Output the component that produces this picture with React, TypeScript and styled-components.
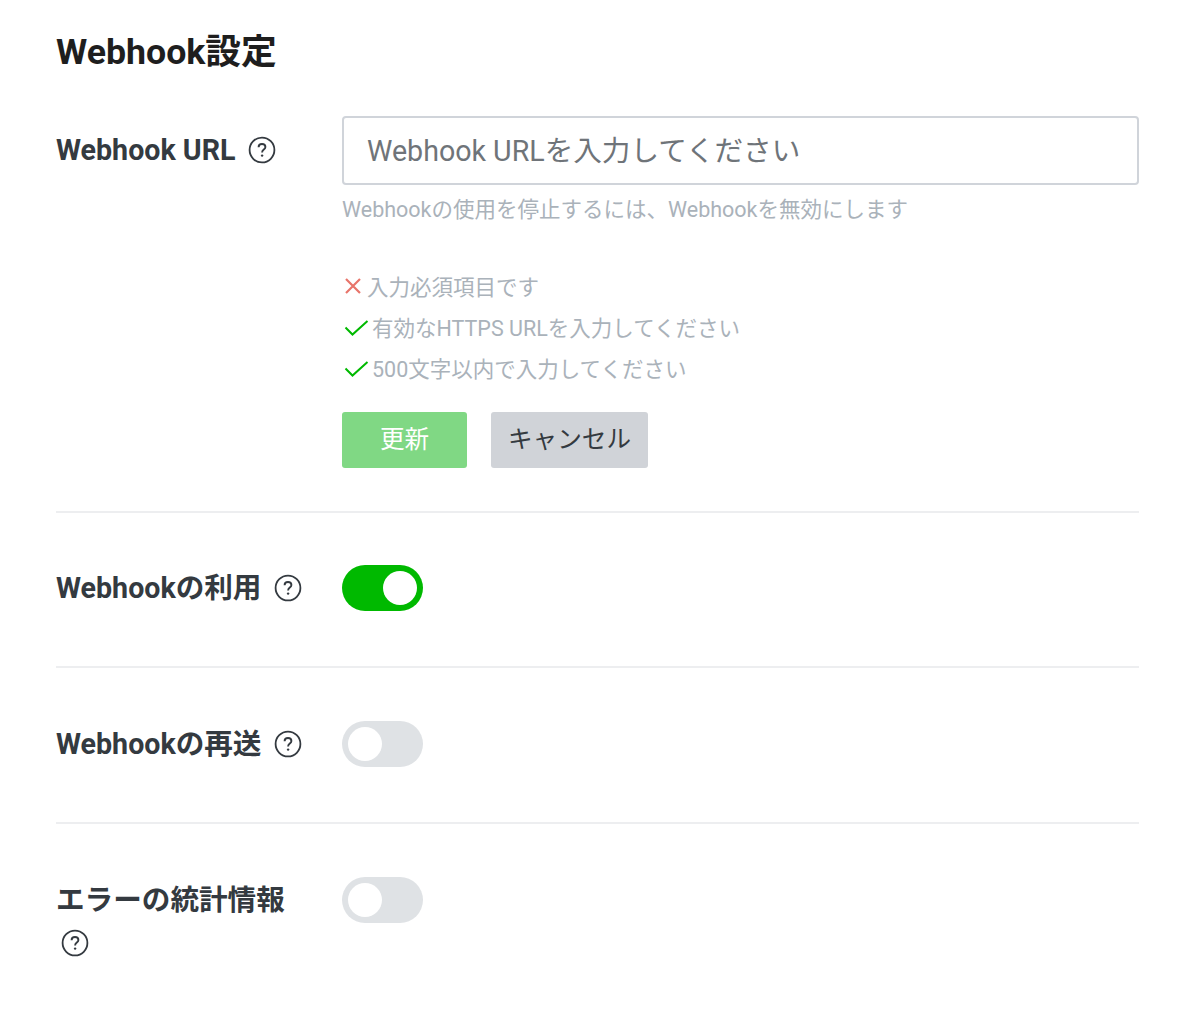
import styled, { createGlobalStyle } from 'styled-components';

const GlobalStyle = createGlobalStyle`
  html, body {
    margin:0;
    padding:0;
    background:#fff;
    font-family:Roboto, "Noto Sans CJK JP", sans-serif;
  }
`;

const Page = styled.div`
  padding:31px 61px 0 56px;
`;

const Title = styled.h1`
  margin:0 0 43px;
  font-size:35.7px;
  line-height:42px;
  font-weight:700;
  color:#1e1e1e;
`;

const Row = styled.section<{ $pad: string; $last?: boolean }>`
  display:grid;
  grid-template-columns:286px 1fr;
  padding:${p => p.$pad};
  border-bottom:${p => (p.$last ? 'none' : '2px solid #edeef0')};
`;

const Label = styled.div<{ $tall?: boolean }>`
  font-size:28.6px;
  line-height:43px;
  font-weight:700;
  color:#343a40;
  padding:${p => (p.$tall ? '13px 40px 0 0' : '2px 40px 0 0')};
`;

const Help = styled.svg`
  display:inline-block;
  width:28px;
  height:28px;
  margin-left:5px;
  vertical-align:-4px;
`;

const Input = styled.input`
  display:block;
  box-sizing:border-box;
  width:100%;
  height:69px;
  padding:0 23px;
  border:2px solid #d0d4da;
  border-radius:4px;
  background:#fff;
  font-family:inherit;
  font-size:28.6px;
  outline:none;
  &::placeholder { color:#6f7479; opacity:1; }
`;

const Hint = styled.p`
  margin:10px 0 40px;
  font-size:21.5px;
  line-height:30px;
  color:#aab2ba;
`;

const Rules = styled.ul`
  list-style:none;
  margin:0 0 24px;
  padding:0;
`;

const Rule = styled.li`
  display:flex;
  align-items:center;
  height:41px;
  font-size:21.5px;
  color:#aab2ba;
`;

const RuleIcon = styled.svg<{ $narrow?: boolean }>`
  flex:none;
  width:${p => (p.$narrow ? '25px' : '30px')};
  height:26px;
`;

const Buttons = styled.div`
  display:flex;
  gap:24px;
`;

const Button = styled.button<{ $primary?: boolean }>`
  height:56px;
  padding:0 17px 6px;
  min-width:125px;
  border:none;
  border-radius:3px;
  background:${p => (p.$primary ? '#80d884' : '#d0d3d8')};
  color:${p => (p.$primary ? '#fff' : '#343a40')};
  font-family:inherit;
  font-size:24.6px;
`;

const Track = styled.div<{ $on?: boolean }>`
  display:flex;
  justify-content:${p => (p.$on ? 'flex-end' : 'flex-start')};
  box-sizing:border-box;
  width:81px;
  height:46px;
  padding:6px;
  border-radius:23px;
  background:${p => (p.$on ? '#00b900' : '#dfe2e5')};
`;

const Knob = styled.div`
  width:34px;
  height:34px;
  border-radius:50%;
  background:#fff;
`;

function HelpIcon() {
  return (
    <Help viewBox="0 0 28 28" fill="none">
      <circle cx="14" cy="14" r="12.4" stroke="#343a40" strokeWidth="1.8" />
      <path d="M10.6 11.2c0-2 1.5-3.2 3.4-3.2s3.4 1.2 3.4 3c0 2.6-3.3 2.6-3.3 5.4" stroke="#343a40" strokeWidth="1.9" />
      <circle cx="14.1" cy="19.6" r="1.2" fill="#343a40" />
    </Help>
  );
}

function CrossIcon() {
  return (
    <RuleIcon $narrow viewBox="0 0 25 26" fill="none">
      <path d="M4 6l14 14M18 6L4 20" stroke="#e8756b" strokeWidth="2.2" />
    </RuleIcon>
  );
}

function CheckIcon() {
  return (
    <RuleIcon viewBox="0 0 30 26" fill="none">
      <path d="M3.5 13.5l7 7L25.5 7" stroke="#00b900" strokeWidth="2" />
    </RuleIcon>
  );
}

export default function App() {
  return (
    <Page>
      <GlobalStyle />
      <Title>Webhook設定</Title>
      <Row $pad="0 0 43px">
        <Label $tall>Webhook URL <HelpIcon /></Label>
        <div>
          <Input placeholder="Webhook URLを入力してください" />
          <Hint>Webhookの使用を停止するには、Webhookを無効にします</Hint>
          <Rules>
            <Rule><CrossIcon />入力必須項目です</Rule>
            <Rule><CheckIcon />有効なHTTPS URLを入力してください</Rule>
            <Rule><CheckIcon />500文字以内で入力してください</Rule>
          </Rules>
          <Buttons>
            <Button $primary>更新</Button>
            <Button>キャンセル</Button>
          </Buttons>
        </div>
      </Row>
      <Row $pad="52px 0 55px">
        <Label>Webhookの利用 <HelpIcon /></Label>
        <Track $on><Knob /></Track>
      </Row>
      <Row $pad="53px 0 55px">
        <Label>Webhookの再送 <HelpIcon /></Label>
        <Track><Knob /></Track>
      </Row>
      <Row $pad="53px 0 55px" $last>
        <Label>エラーの統計情報 <HelpIcon /></Label>
        <Track><Knob /></Track>
      </Row>
    </Page>
  );
}
